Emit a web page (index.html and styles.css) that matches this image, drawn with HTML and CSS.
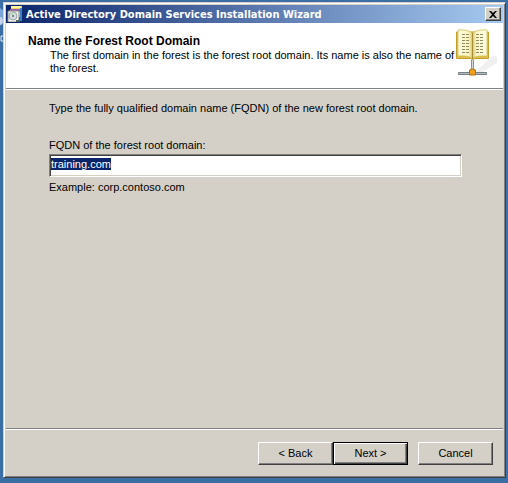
FILE: index.html
```html
<!DOCTYPE html>
<html lang="en">
<head>
    <meta charset="utf-8">
    <meta name="viewport" content="width=device-width, initial-scale=1.0">
    <title>Active Directory Domain Services Installation Wizard</title>
    <link rel="stylesheet" href="styles.css">
</head>
<body>
    <!-- desktop icon behind the window -->
    <svg class="desktop-icon" width="4" height="44" viewBox="0 0 4 44" aria-hidden="true">
        <path d="M0 8l4 3v8l-4 4z" fill="#7ba6dc"/>
        <path d="M0 17q3 0 3 4t-3 4z" fill="#c3d2e6"/>
        <path d="M4 36H1v5h3" fill="none" stroke="#e4edf5"/>
    </svg>

    <form class="window" onsubmit="return false">
        <div class="title-bar">
            <svg class="title-icon" width="16" height="16" viewBox="0 0 16 16" aria-hidden="true">
                <path d="M4 0h11v11H4z" fill="#ead35c"/>
                <path d="M4 0h10v2H4z" fill="#fff3a0"/>
                <path d="M3 3h11v3H3z" fill="#9c5cb4"/>
                <path d="M13 2h2v13h-2z" fill="#3f7fc4"/>
                <path d="M1 5h11v11H1z" fill="#f2f2ee" stroke="#8b8f8b"/>
                <circle cx="6" cy="10" r="4" fill="#d5dbe0" stroke="#9ba5a5"/>
                <path d="M6 10L3 7a4 4 0 0 1 3-1z" fill="#b7dfb3"/>
                <circle cx="6" cy="10" r="1" fill="#5d6f6b"/>
                <path d="M9 14h4v2H9z" fill="#56615c"/>
            </svg>
            <span class="title-text">Active Directory Domain Services Installation Wizard</span>
            <button type="button" class="close-button" aria-label="Close">
                <svg width="8" height="7" viewBox="0 0 8 7" aria-hidden="true">
                    <path d="M0 0h2l2 2 2-2h2L5 3.5 8 7H6L4 5 2 7H0l3-3.5z" fill="#000"/>
                </svg>
            </button>
        </div>

        <div class="header">
            <div class="header-text">
                <h1>Name the Forest Root Domain</h1>
                <p>The first domain in the forest is the forest root domain. Its name is also the name of the forest.</p>
            </div>
            <svg class="header-icon" width="42" height="50" viewBox="1 0 42 50" aria-hidden="true">
                <defs>
                    <linearGradient id="pageLeft">
                        <stop offset="0" stop-color="#fffce0"/>
                        <stop offset="0.75" stop-color="#faf4bd"/>
                        <stop offset="1" stop-color="#d9c76b"/>
                    </linearGradient>
                    <linearGradient id="pageRight">
                        <stop offset="0" stop-color="#d5c36c"/>
                        <stop offset="0.25" stop-color="#fbf5c4"/>
                        <stop offset="1" stop-color="#fffce4"/>
                    </linearGradient>
                </defs>
                <path d="M19 45L32 33l7-6 3 2v6L26 45z" fill="#f0f0f0"/>
                <!-- book -->
                <path d="M1.500 4h32v26.500H19l-1.500 2-1.500-2H1.500z" fill="#dfc14a" stroke="#c2a02a"/>
                <path d="M3 2q9-1 14.500 3v25q-6-3-14.500-2z" fill="url(#pageLeft)" stroke="#cdb84e" stroke-width="0.700"/>
                <path d="M32 2q-9-1-14.500 3v25q6-3 14.500-2z" fill="url(#pageRight)" stroke="#cdb84e" stroke-width="0.700"/>
                <path d="M17.500 5v26" stroke="#a58c35"/>
                <g stroke="#8d8b62" stroke-dasharray="3 1">
                    <path d="M7 6.500h7M7 9.500h7M7 12.500h7M7 15.500h7M7 18.500h7M7 21.500h7M7 24.500h7"/>
                    <path d="M21 6.500h7M21 9.500h7M21 12.500h7M21 15.500h7M21 18.500h7M21 21.500h7M21 24.500h7"/>
                </g>
                <!-- network cable -->
                <path d="M16 32h3v9h-3z" fill="#8d9499"/>
                <path d="M17 32h1v9h-1z" fill="#d5dadd"/>
                <path d="M3.500 44.500h28v2h-28z" fill="#b3babd" stroke="#778087"/>
                <path d="M14.500 42l3-1 3 1v5h-6z" fill="#efa01f" stroke="#b26e0c"/>
            </svg>
        </div>

        <div class="content">
            <p class="intro">Type the fully qualified domain name (FQDN) of the new forest root domain.</p>
            <label for="fqdn">FQDN of the forest root domain:</label>
            <input type="text" id="fqdn" value="training.com" spellcheck="false" autocomplete="off">
            <p class="example">Example: corp.contoso.com</p>
        </div>

        <div class="footer">
            <button type="button" class="button">&lt; Back</button>
            <button type="submit" class="button default">Next &gt;</button>
            <button type="button" class="button cancel">Cancel</button>
        </div>
    </form>

    <script>
        // select the domain name so it can be typed over
        const fqdn = document.getElementById('fqdn');
        fqdn.focus();
        fqdn.select();
    </script>
</body>
</html>
```
FILE: styles.css
```css
* {
    box-sizing: border-box;
}

body {
    margin: 0;
    padding: 2px 2px 5px 3px;
    min-height: 100vh;
    display: flex;
    background-color: #3a6ea5;
    font-family: "Liberation Sans", Arial, sans-serif;
    font-size: 11px;
    line-height: 13px;
    color: #000;
}

h1, p {
    margin: 0;
}

.desktop-icon {
    position: absolute;
    top: 0;
    left: 0;
}

/* raised window frame */
.window {
    position: relative;
    flex: 1;
    display: flex;
    flex-direction: column;
    padding: 2px 2px 1px 2px;
    background-color: #d4d0c8;
    border: 1px solid;
    border-color: #d4d0c8 #404040 #404040 #d4d0c8;
    box-shadow: inset 1px 1px #fff, inset -1px -1px #808080;
}

.title-bar {
    display: flex;
    align-items: center;
    height: 18px;
    padding: 0 2px 0 1px;
    background: linear-gradient(to right, #0a246a, #a6caf0);
}

.title-text {
    flex: 1;
    margin-left: 3px;
    font-family: "DejaVu Sans Condensed", Tahoma, sans-serif;
    font-size: 11px;
    font-weight: bold;
    color: #fff;
    white-space: nowrap;
}

.close-button {
    display: flex;
    align-items: center;
    justify-content: center;
    width: 16px;
    height: 14px;
    padding: 0;
    background-color: #d4d0c8;
    border: 1px solid;
    border-color: #fff #404040 #404040 #fff;
    box-shadow: inset -1px -1px #808080;
}

.header {
    display: flex;
    justify-content: space-between;
    height: 66px;
    padding: 5px 5px 0 22px;
    background-color: #fff;
    border-bottom: 1px solid #808080;
    box-shadow: 0 1px #fff;
}

.header-text {
    padding-top: 5px;
}

.header-text h1 {
    font-size: 12px;
    line-height: 16px;
}

.header-text p {
    max-width: 430px;
    padding-left: 22px;
}

.header-icon {
    flex-shrink: 0;
}

.content {
    flex: 1;
    padding: 13px 41px 0 43px;
}

.intro {
    margin-bottom: 24px;
}

.content label {
    display: block;
    margin-bottom: 2px;
}

.content input {
    display: block;
    width: 100%;
    height: 23px;
    padding: 0 1px 3px;
    font: inherit;
    background-color: #fff;
    border: 1px solid;
    border-color: #808080 #fff #fff #808080;
    border-radius: 0;
    outline: none;
    box-shadow: inset 1px 1px #404040, inset -1px -1px #d4d0c8;
}

.content input::selection {
    background-color: #0a246a;
    color: #fff;
}

.example {
    margin-top: 4px;
}

.footer {
    display: flex;
    justify-content: flex-end;
    padding: 13px 10px 11px;
    border-top: 1px solid #808080;
    box-shadow: inset 0 1px #fff;
}

.button {
    width: 75px;
    height: 23px;
    padding: 0;
    font: inherit;
    color: #000;
    background-color: #d4d0c8;
    border: 1px solid;
    border-color: #fff #404040 #404040 #fff;
    box-shadow: inset -1px -1px #808080;
}

.button.default {
    border-color: #000;
    box-shadow: inset 1px 1px #fff, inset -1px -1px #404040, inset -2px -2px #808080;
}

.button.cancel {
    margin-left: 10px;
}
```
